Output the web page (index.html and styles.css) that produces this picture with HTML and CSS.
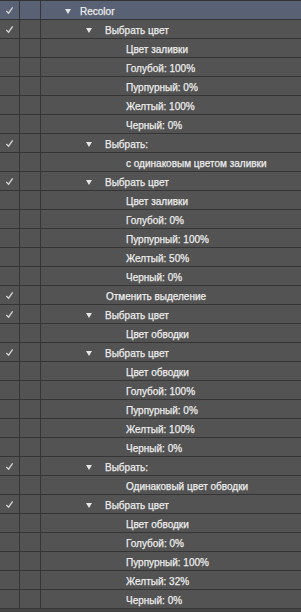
FILE: index.html
```html
<!DOCTYPE html>
<html lang="ru">
<head>
  <meta charset="UTF-8">
  <title>Actions</title>
  <link rel="stylesheet" href="styles.css">
</head>
<body>
  <div class="panel">
    <div class="row sel"><div class="chk"><svg viewBox="0 0 10 10"><path d="M1.5 5.5 L4 8 L8.5 1.5"/></svg></div><div class="vis"></div><div class="name l1"><span class="tri"></span>Recolor</div></div>
    <div class="row"><div class="chk"><svg viewBox="0 0 10 10"><path d="M1.5 5.5 L4 8 L8.5 1.5"/></svg></div><div class="vis"></div><div class="name l2"><span class="tri"></span>Выбрать цвет</div></div>
    <div class="row"><div class="chk"></div><div class="vis"></div><div class="name l3">Цвет заливки</div></div>
    <div class="row"><div class="chk"></div><div class="vis"></div><div class="name l3">Голубой: 100%</div></div>
    <div class="row"><div class="chk"></div><div class="vis"></div><div class="name l3">Пурпурный: 0%</div></div>
    <div class="row"><div class="chk"></div><div class="vis"></div><div class="name l3">Желтый: 100%</div></div>
    <div class="row"><div class="chk"></div><div class="vis"></div><div class="name l3">Черный: 0%</div></div>
    <div class="row"><div class="chk"><svg viewBox="0 0 10 10"><path d="M1.5 5.5 L4 8 L8.5 1.5"/></svg></div><div class="vis"></div><div class="name l2"><span class="tri"></span>Выбрать:</div></div>
    <div class="row"><div class="chk"></div><div class="vis"></div><div class="name l3">с одинаковым цветом заливки</div></div>
    <div class="row"><div class="chk"><svg viewBox="0 0 10 10"><path d="M1.5 5.5 L4 8 L8.5 1.5"/></svg></div><div class="vis"></div><div class="name l2"><span class="tri"></span>Выбрать цвет</div></div>
    <div class="row"><div class="chk"></div><div class="vis"></div><div class="name l3">Цвет заливки</div></div>
    <div class="row"><div class="chk"></div><div class="vis"></div><div class="name l3">Голубой: 0%</div></div>
    <div class="row"><div class="chk"></div><div class="vis"></div><div class="name l3">Пурпурный: 100%</div></div>
    <div class="row"><div class="chk"></div><div class="vis"></div><div class="name l3">Желтый: 50%</div></div>
    <div class="row"><div class="chk"></div><div class="vis"></div><div class="name l3">Черный: 0%</div></div>
    <div class="row"><div class="chk"><svg viewBox="0 0 10 10"><path d="M1.5 5.5 L4 8 L8.5 1.5"/></svg></div><div class="vis"></div><div class="name l2">Отменить выделение</div></div>
    <div class="row"><div class="chk"><svg viewBox="0 0 10 10"><path d="M1.5 5.5 L4 8 L8.5 1.5"/></svg></div><div class="vis"></div><div class="name l2"><span class="tri"></span>Выбрать цвет</div></div>
    <div class="row"><div class="chk"></div><div class="vis"></div><div class="name l3">Цвет обводки</div></div>
    <div class="row"><div class="chk"><svg viewBox="0 0 10 10"><path d="M1.5 5.5 L4 8 L8.5 1.5"/></svg></div><div class="vis"></div><div class="name l2"><span class="tri"></span>Выбрать цвет</div></div>
    <div class="row"><div class="chk"></div><div class="vis"></div><div class="name l3">Цвет обводки</div></div>
    <div class="row"><div class="chk"></div><div class="vis"></div><div class="name l3">Голубой: 100%</div></div>
    <div class="row"><div class="chk"></div><div class="vis"></div><div class="name l3">Пурпурный: 0%</div></div>
    <div class="row"><div class="chk"></div><div class="vis"></div><div class="name l3">Желтый: 100%</div></div>
    <div class="row"><div class="chk"></div><div class="vis"></div><div class="name l3">Черный: 0%</div></div>
    <div class="row"><div class="chk"><svg viewBox="0 0 10 10"><path d="M1.5 5.5 L4 8 L8.5 1.5"/></svg></div><div class="vis"></div><div class="name l2"><span class="tri"></span>Выбрать:</div></div>
    <div class="row"><div class="chk"></div><div class="vis"></div><div class="name l3">Одинаковый цвет обводки</div></div>
    <div class="row"><div class="chk"><svg viewBox="0 0 10 10"><path d="M1.5 5.5 L4 8 L8.5 1.5"/></svg></div><div class="vis"></div><div class="name l2"><span class="tri"></span>Выбрать цвет</div></div>
    <div class="row"><div class="chk"></div><div class="vis"></div><div class="name l3">Цвет обводки</div></div>
    <div class="row"><div class="chk"></div><div class="vis"></div><div class="name l3">Голубой: 0%</div></div>
    <div class="row"><div class="chk"></div><div class="vis"></div><div class="name l3">Пурпурный: 100%</div></div>
    <div class="row"><div class="chk"></div><div class="vis"></div><div class="name l3">Желтый: 32%</div></div>
    <div class="row"><div class="chk"></div><div class="vis"></div><div class="name l3">Черный: 0%</div></div>
  </div>
</body>
</html>
```

FILE: styles.css
```css
body { margin: 0; background: #464646; font-family: "Liberation Sans", Arial, sans-serif; font-size: 10px; color: #ececec; -webkit-text-stroke: 0.25px #ececec; }
.panel { border-top: 1px solid #333; }
.row { display: flex; height: 18px; border-bottom: 1px solid #353535; background: #535353; }
.row.sel { background: #596274; }
.chk { width: 19px; border-right: 1px solid #353535; display: flex; align-items: center; justify-content: center; }
.chk svg { width: 9px; height: 9px; fill: none; stroke: #d2d2d2; stroke-width: 1.5; }
.vis { width: 20px; border-right: 1px solid #353535; }
.name { flex: 1; display: flex; align-items: center; padding-top: 2px; box-sizing: border-box; white-space: nowrap; }
.l1 { padding-left: 40px; }
.l2 { padding-left: 65px; }
.l3 { padding-left: 85px; }
.tri { width: 0; height: 0; border-left: 3.5px solid transparent; border-right: 3.5px solid transparent; border-top: 5px solid #e6e6e6; -webkit-text-stroke: 0; }
.l1 .tri { margin-left: -16px; margin-right: 9px; }
.l2 .tri { margin-left: -20px; margin-right: 13px; }
```
